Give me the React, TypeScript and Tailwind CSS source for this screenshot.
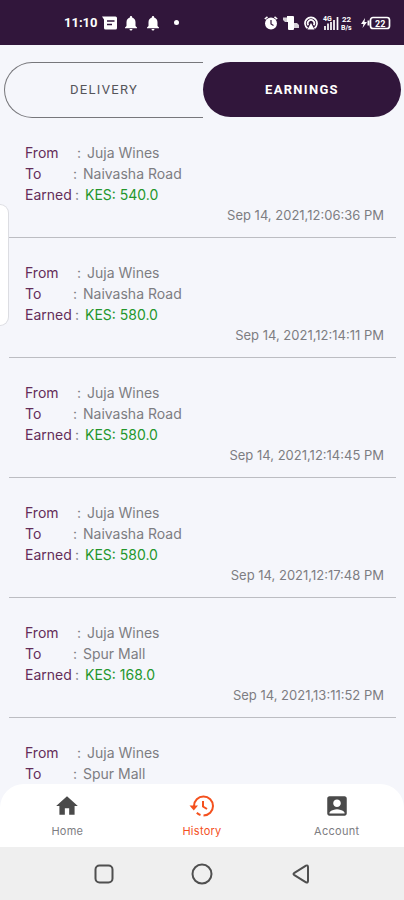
import { useState } from "react";
import { MdAccountBox, MdHome, MdNotifications } from "react-icons/md";

type Earning = {
    id: number;
    from: string;
    to: string;
    amount?: string;
    date?: string;
};

const earnings: Earning[] = [
    { id: 1, from: "Juja Wines", to: "Naivasha Road", amount: "540.0", date: "Sep 14, 2021,12:06:36 PM" },
    { id: 2, from: "Juja Wines", to: "Naivasha Road", amount: "580.0", date: "Sep 14, 2021,12:14:11 PM" },
    { id: 3, from: "Juja Wines", to: "Naivasha Road", amount: "580.0", date: "Sep 14, 2021,12:14:45 PM" },
    { id: 4, from: "Juja Wines", to: "Naivasha Road", amount: "580.0", date: "Sep 14, 2021,12:17:48 PM" },
    { id: 5, from: "Juja Wines", to: "Spur Mall", amount: "168.0", date: "Sep 14, 2021,13:11:52 PM" },
    { id: 6, from: "Juja Wines", to: "Spur Mall" },
];

function StatusBar() {
    return (
        <header className="flex h-[45px] shrink-0 items-center justify-between bg-[#31163b] pr-3 pl-16 font-[Roboto,sans-serif] text-white">
            <div className="flex items-center gap-1">
                <span className="text-[13px] font-bold">11:10</span>
                <svg viewBox="0 0 16 14" className="h-[14px] w-4" fill="currentColor">
                    <path d="M0 .5h13.500q1.500 0 1.500 1.500v10q0 1.500-1.500 1.500h-10Q2 13.500 2 12V3.500z" />
                    <path d="M5 5h7.500M5 8.500h5" stroke="#31163b" strokeWidth="1.300" />
                </svg>
                <MdNotifications className="size-[18px]" />
                <MdNotifications className="size-[18px]" />
                <span className="ml-2 size-[5px] rounded-full bg-white" />
            </div>

            <div className="flex items-center gap-1">
                <svg viewBox="0 0 14 14" className="size-[14px]" fill="currentColor">
                    <circle cx="7" cy="7.500" r="6" />
                    <path d="M.8 3 3.500.8M13.200 3 10.500.8" stroke="currentColor" strokeWidth="1.600" />
                    <path d="M7 4v4l2.500 1.500" fill="none" stroke="#31163b" strokeWidth="1.200" />
                </svg>
                <svg viewBox="0 0 18 14" className="h-[14px] w-[18px]" fill="currentColor">
                    <path d="M5 0h6q1 0 1 1v12q0 1-1 1H7q-1 0-1-1V6H5z" />
                    <path d="M1 1.500h5v4.500H3L1 4zM11 7h4l2 2v3h-6z" opacity=".8" />
                </svg>
                <svg viewBox="0 0 14 14" className="size-[14px]" fill="none" stroke="currentColor" strokeWidth="1.700">
                    <path d="M3.500 12.200a6 6 0 1 1 7 0" />
                    <path d="M4.300 9.300a3.300 3.300 0 1 1 5.400 0" />
                    <path d="M3.500 13.500 7 7l3.500 6.500z" fill="currentColor" stroke="none" />
                </svg>
                <svg viewBox="0 0 34 16" className="h-4 w-[34px]" fill="currentColor">
                    <text x="1" y="6" fontSize="7" fontWeight="700">4G</text>
                    <path d="M3 11v4M6 8.500V15M9 7v8M12 5v10M15.500 2v13" stroke="currentColor" strokeWidth="1.700" />
                    <text x="20" y="7" fontSize="8" fontWeight="700">22</text>
                    <text x="19" y="15" fontSize="7" fontWeight="700">B/s</text>
                </svg>
                <svg viewBox="0 0 32 14" className="h-[14px] w-8" fill="none" stroke="currentColor">
                    <path d="M5 2 1 8h2.500L2.500 12 7 6H4.500z" fill="currentColor" stroke="none" />
                    <path d="M8.500 4.500v5" strokeWidth="2" />
                    <rect x="10.500" y="1.500" width="19" height="11" rx="2.500" strokeWidth="1.700" />
                    <text x="15" y="10.500" fontSize="9" fontWeight="700" fill="currentColor" stroke="none">22</text>
                </svg>
            </div>
        </header>
    );
}

function EarningRow({ item }: { item: Earning }) {
    return (
        <li className="border-b border-[#bcbdc2] pt-6 pr-3 pb-[11px] pl-4 text-[#7d7d82]">
            <div className="flex">
                <span className="w-[52px] text-[#642d59]">From</span>
                <span className="w-[10px]">:</span>
                <span>{item.from}</span>
            </div>
            <div className="flex">
                <span className="w-12 text-[#642d59]">To</span>
                <span className="w-[10px]">:</span>
                <span>{item.to}</span>
            </div>
            {item.amount && (
                <div className="flex text-[#24962c]">
                    <span className="w-[50px] text-[#642d59]">Earned</span>
                    <span className="w-[10px] text-[#7d7d82]">:</span>
                    <span>KES: {item.amount}</span>
                </div>
            )}
            {item.date && <p className="text-right text-[13px] leading-[21px]">{item.date}</p>}
        </li>
    );
}

export default function App() {
    const [tab, setTab] = useState("earnings");

    return (
        <div className="flex h-screen flex-col overflow-hidden bg-[#f5f6fb] font-[Inter,sans-serif]">
            <StatusBar />

            <div className="mt-[17px] flex h-14 shrink-0 pr-[3px] pl-1 font-[Roboto,sans-serif] text-[13px] tracking-widest">
                <button
                    onClick={() => setTab("delivery")}
                    aria-pressed={tab === "delivery"}
                    className="flex-1 rounded-l-full border border-r-0 border-[#77777b] text-[#55555a]"
                >
                    DELIVERY
                </button>
                <button
                    onClick={() => setTab("earnings")}
                    aria-pressed={tab === "earnings"}
                    className="mb-px flex-1 rounded-full bg-[#31163b] font-bold text-white"
                >
                    EARNINGS
                </button>
            </div>

            <main className="relative min-h-0 flex-1 overflow-hidden">
                <ul className="pr-2 pl-[9px] text-sm leading-[21px]">
                    {earnings.map(item => (
                        <EarningRow key={item.id} item={item} />
                    ))}
                </ul>
                {/* edge panel handle, sits over the list */}
                <div className="absolute top-[86px] left-0 h-[122px] w-[9px] rounded-r-xl border border-l-0 border-[#dcdde2] bg-white" />
            </main>

            <nav className="flex h-[63px] shrink-0 rounded-t-3xl bg-white text-[11px] tracking-wide text-[#7d7d82]">
                <a href="#home" className="flex flex-1 flex-col items-center gap-1 pt-[9px]">
                    <MdHome className="size-[26px] text-[#4a4a4a]" />
                    Home
                </a>
                <a href="#history" className="flex flex-1 flex-col items-center gap-1 pt-[9px] text-[#f4511e]">
                    <svg viewBox="0 0 26 26" className="size-[26px]" fill="none" stroke="currentColor" strokeWidth="2">
                        <path d="M5 13a9.500 9.500 0 1 1 9.500 9.500" />
                        <path d="M7.800 19.700a9.500 9.500 0 0 0 3.700 2.300" />
                        <path d="M14 8v5.500l4 2.500" />
                        <path d="M.5 12.500h8.500l-4.200 5z" fill="currentColor" stroke="none" />
                    </svg>
                    History
                </a>
                <a href="#account" className="flex flex-1 flex-col items-center gap-1 pt-[9px]">
                    <MdAccountBox className="size-[26px] text-[#4a4a4a]" />
                    Account
                </a>
            </nav>

            <footer className="flex h-[53px] shrink-0 items-center justify-center gap-[76px] bg-[#efefef] text-[#4f4f4f]">
                <button aria-label="Recent apps">
                    <svg viewBox="0 0 22 22" className="size-[22px]" fill="none" stroke="currentColor" strokeWidth="2">
                        <rect x="2.500" y="2.500" width="17" height="17" rx="4" />
                    </svg>
                </button>
                <button aria-label="Home screen">
                    <svg viewBox="0 0 22 22" className="size-[22px]" fill="none" stroke="currentColor" strokeWidth="2">
                        <circle cx="11" cy="11" r="9.500" />
                    </svg>
                </button>
                <button aria-label="Back">
                    <svg viewBox="0 0 22 22" className="size-[22px]" fill="none" stroke="currentColor" strokeWidth="2" strokeLinejoin="round">
                        <path d="M5 11.800q-1-.8 0-1.600l12-7.500q2-1 2 1.300v14q0 2-2 1.300z" />
                    </svg>
                </button>
            </footer>
        </div>
    );
}
